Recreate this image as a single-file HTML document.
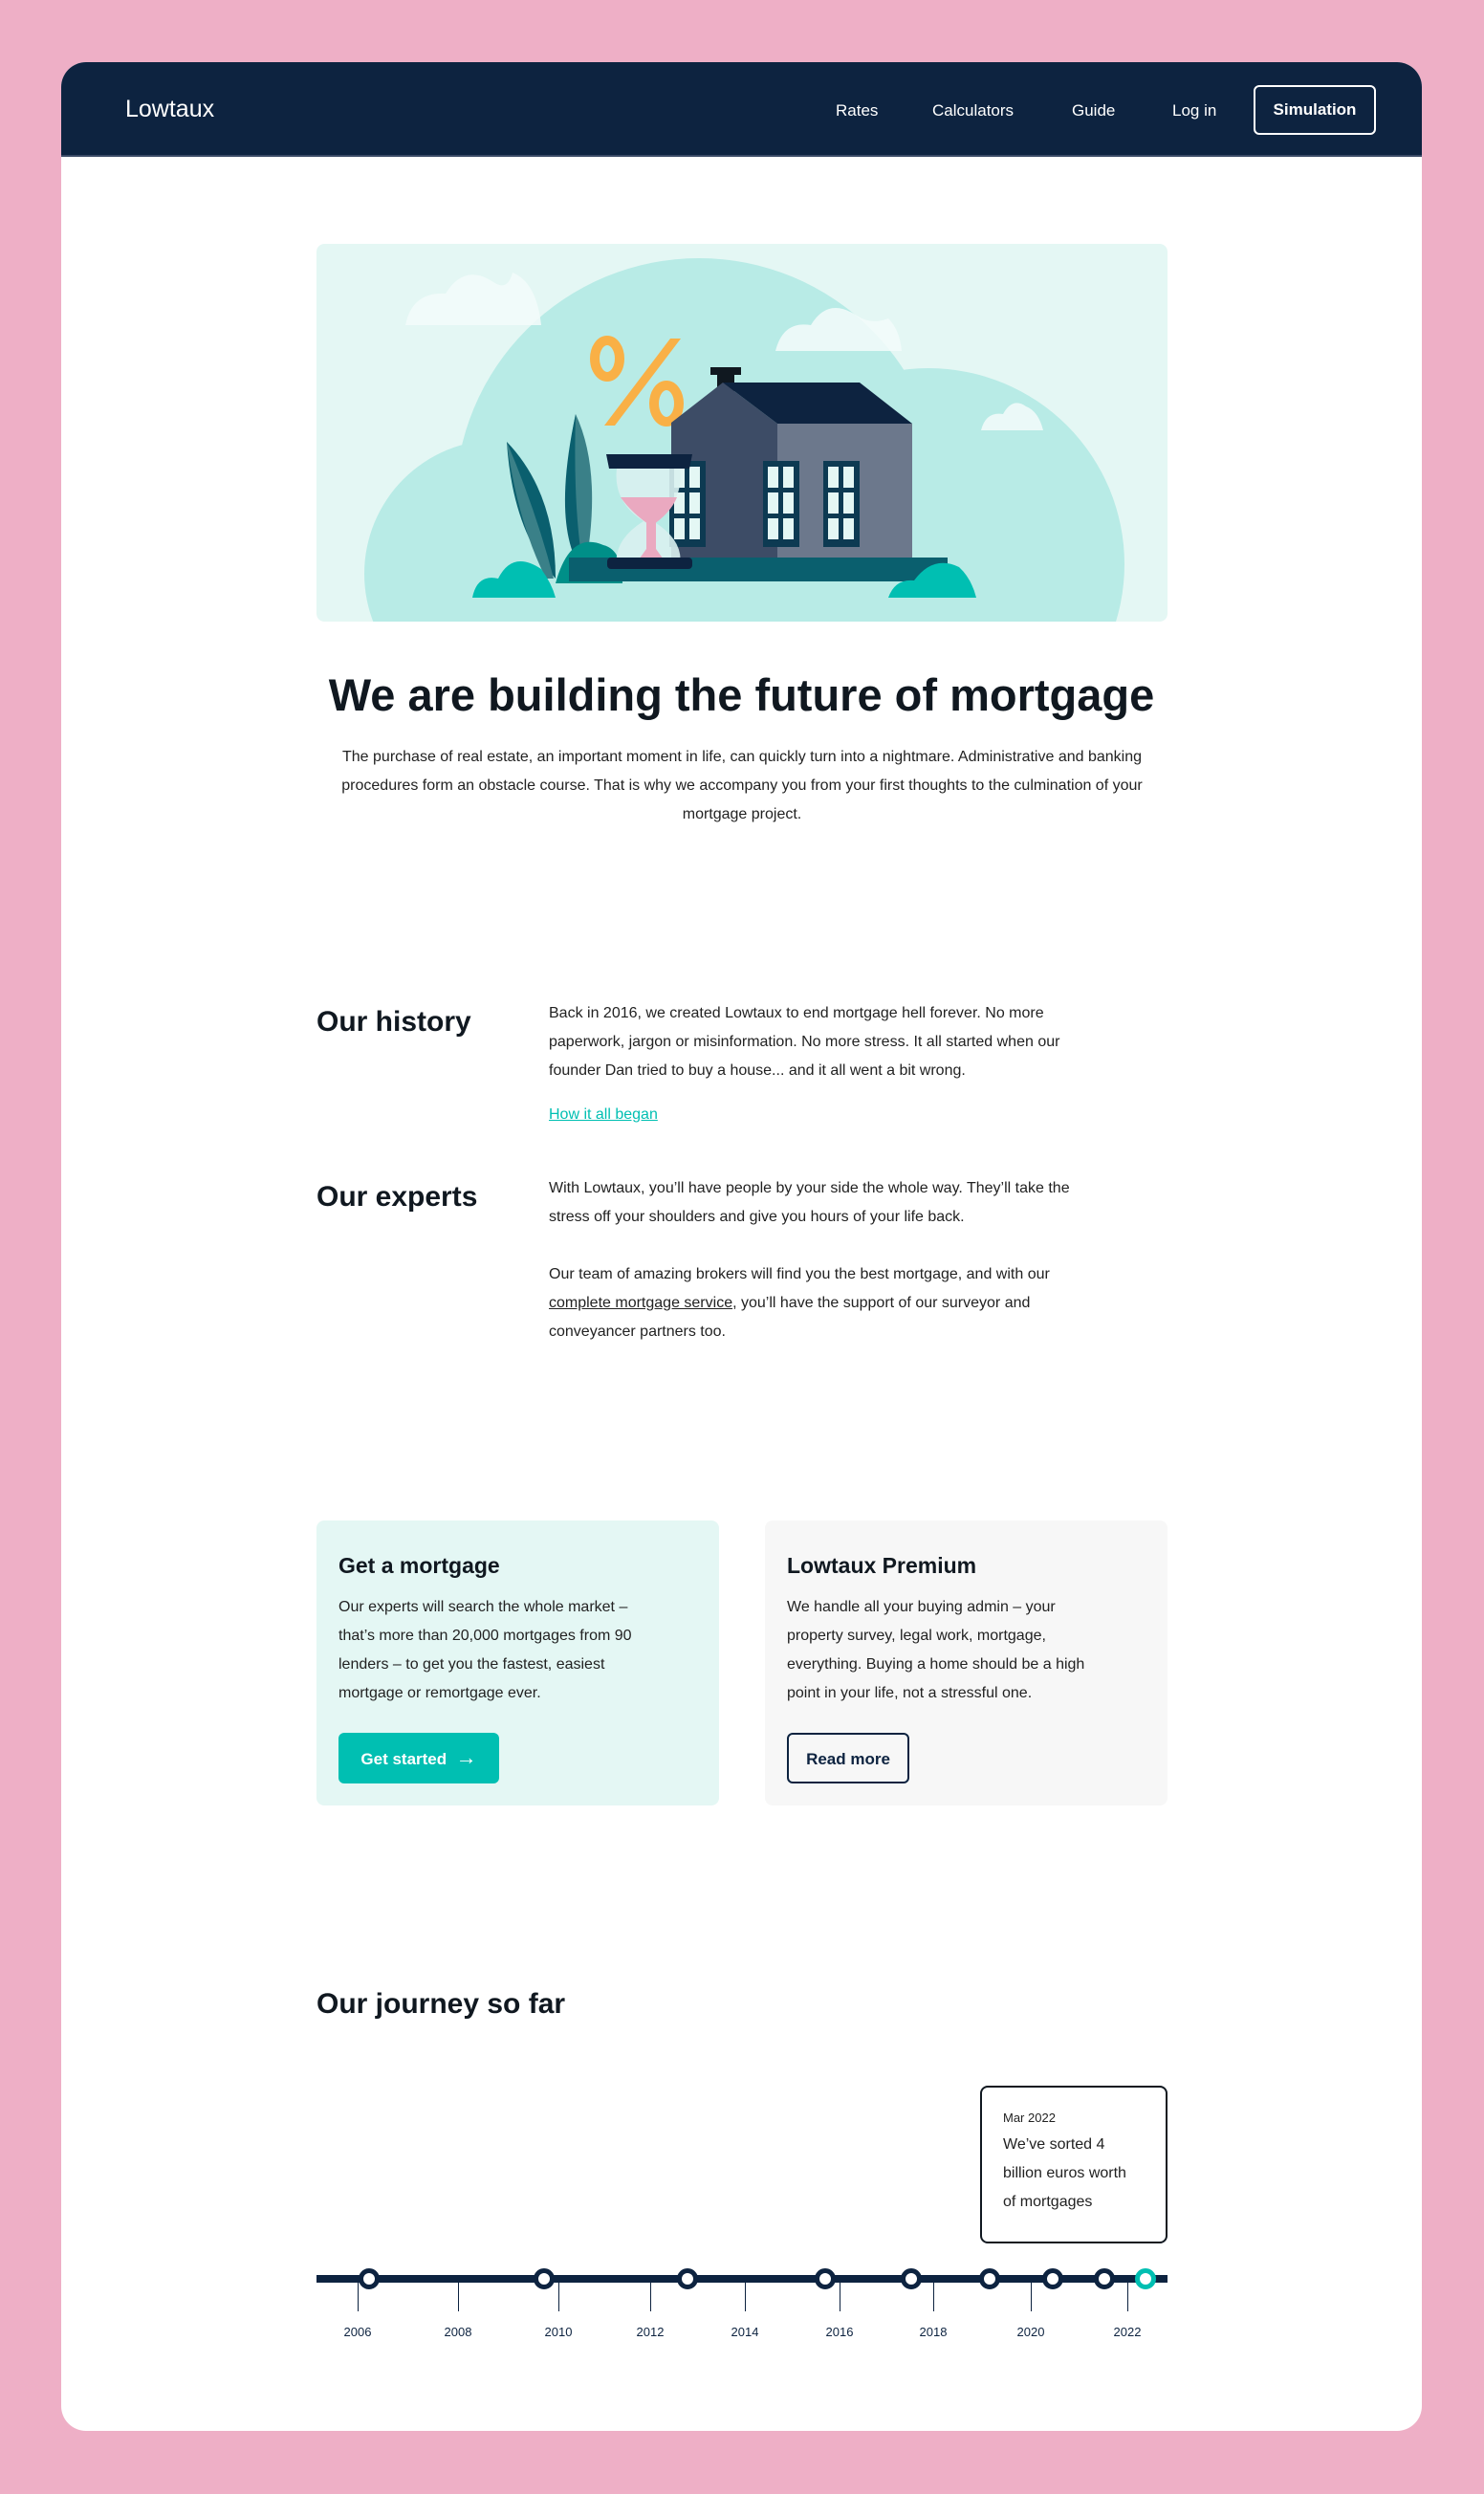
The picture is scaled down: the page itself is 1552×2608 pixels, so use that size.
<!DOCTYPE html>
<html><head><meta charset="utf-8">
<style>
*{margin:0;padding:0;box-sizing:border-box}
body{width:1552px;height:2608px;background:#eeafc6;font-family:"Liberation Sans",sans-serif;color:#101820;position:relative;overflow:hidden}
.card{position:absolute;left:64px;top:65px;width:1423px;height:2477px;background:#fff;border-radius:26px;overflow:hidden}
.nav{position:absolute;left:0;top:0;width:100%;height:99px;background:#0d2340;border-bottom:2px solid #3a4a66}
.nav .logo{position:absolute;left:67px;top:35px;color:#fff;font-size:25px}
.nav a{position:absolute;top:41px;color:#fff;font-size:17px;text-decoration:none}
.sim{position:absolute;left:1247px;top:24px;width:128px;height:52px;border:2px solid #fff;border-radius:6px;color:#fff;font-weight:bold;font-size:17px;text-align:center;line-height:48px}
.abs{position:absolute}
h1{position:absolute;left:0;width:100%;top:634px;text-align:center;font-size:47px;font-weight:bold;color:#101820}
.intro{position:absolute;left:287px;width:850px;top:712px;text-align:center;font-size:16px;line-height:30px;color:#222}
h2{position:absolute;font-size:30px;font-weight:bold;color:#101820}
.p{position:absolute;left:510px;width:590px;font-size:16px;line-height:30px;color:#222}
.box{position:absolute;top:1525px;width:421px;height:298px;border-radius:8px;padding:32px 23px}
.box h3{font-size:23px;font-weight:bold;margin-bottom:14px;line-height:30px}
.box p{font-size:16px;line-height:30px;color:#222;width:340px}
.btn{position:absolute;top:222px;left:23px;height:53px;border-radius:6px;font-weight:bold;font-size:17px;line-height:51px;text-align:center}
.yr{position:absolute;top:2366px;font-size:13px;color:#0d2340;width:60px;margin-left:-30px;text-align:center}
.tk{position:absolute;top:2318px;width:1px;height:34px;background:#0d2340}
.dot{position:absolute;top:2307px;width:22px;height:22px;margin-left:-11px;border-radius:50%;background:#fff;border:5px solid #0d2340}
</style></head><body>
<div class="card">
 <div class="nav">
  <div class="logo">Lowtaux</div>
  <a style="left:810px">Rates</a>
  <a style="left:911px">Calculators</a>
  <a style="left:1057px">Guide</a>
  <a style="left:1162px">Log in</a>
  <div class="sim">Simulation</div>
 </div>

 <svg class="abs" style="left:267px;top:190px;border-radius:8px" width="890" height="395" viewBox="0 0 890 395">
  <defs><clipPath id="c"><rect width="890" height="395" rx="8"/></clipPath></defs>
  <g clip-path="url(#c)">
  <rect width="890" height="395" fill="#e4f7f4"/>
  <circle cx="400" cy="270" r="255" fill="#b8ebe6"/>
  <circle cx="640" cy="335" r="205" fill="#b8ebe6"/>
  <circle cx="190" cy="345" r="140" fill="#b8ebe6"/>
  <rect x="190" y="290" width="600" height="105" fill="#b8ebe6"/>
  <g fill="#f3fbfa" opacity=".85">
   <path d="M93 85 Q100 50 135 52 Q155 20 185 40 Q200 50 205 30 Q230 40 235 85 Z"/>
   <path d="M480 112 Q488 80 517 85 Q535 55 565 75 Q580 85 598 78 Q610 90 612 112 Z"/>
   <path d="M695 195 Q700 175 718 178 Q728 160 742 170 Q755 175 760 195 Z"/>
  </g>
  <ellipse cx="304" cy="120" rx="13" ry="19" fill="none" stroke="#f9b046" stroke-width="10"/>
  <ellipse cx="366" cy="167" rx="13" ry="19" fill="none" stroke="#f9b046" stroke-width="10"/>
  <polygon points="370,99 381,99 312,190 301,190" fill="#f9b046"/>
  <path d="M199 207 Q250 260 250 350 Q205 300 199 207Z" fill="#0a5f6e"/>
  <path d="M199 207 Q230 280 248 350 L240 350 Q210 290 199 207Z" fill="#3a8088"/>
  <path d="M271 178 Q300 240 280 345 Q250 280 271 178Z" fill="#3a8088"/>
  <path d="M271 178 Q268 280 280 345 Q245 300 271 178Z" fill="#0a5f6e"/>
  <path d="M250 355 Q265 300 300 315 Q320 320 320 355Z" fill="#008f88"/>
  <rect x="264" y="328" width="396" height="25" fill="#0a5f6e"/>
  <rect x="412" y="129" width="32" height="8" fill="#101820"/>
  <rect x="419" y="137" width="18" height="25" fill="#101820"/>
  <polygon points="371,187 425,145 482,188 482,328 371,328" fill="#3d4c66"/>
  <rect x="482" y="188" width="141" height="140" fill="#6c788c"/>
  <polygon points="425,145 568,145 623,188 482,188" fill="#0d2340"/>
  <g fill="#0d3a52">
   <rect x="369" y="227" width="38" height="90"/><rect x="467" y="227" width="38" height="90"/><rect x="530" y="227" width="38" height="90"/>
  </g>
  <g fill="#e4f7f4">
   <rect x="374" y="233" width="11" height="22"/><rect x="390" y="233" width="11" height="22"/><rect x="374" y="260" width="11" height="22"/><rect x="390" y="260" width="11" height="22"/><rect x="374" y="287" width="11" height="22"/><rect x="390" y="287" width="11" height="22"/>
   <rect x="472" y="233" width="11" height="22"/><rect x="488" y="233" width="11" height="22"/><rect x="472" y="260" width="11" height="22"/><rect x="488" y="260" width="11" height="22"/><rect x="472" y="287" width="11" height="22"/><rect x="488" y="287" width="11" height="22"/>
   <rect x="535" y="233" width="11" height="22"/><rect x="551" y="233" width="11" height="22"/><rect x="535" y="260" width="11" height="22"/><rect x="551" y="260" width="11" height="22"/><rect x="535" y="287" width="11" height="22"/><rect x="551" y="287" width="11" height="22"/>
  </g>
  <path d="M314 235 L380 235 Q385 270 352 290 Q385 310 380 338 L314 338 Q310 310 342 290 Q310 270 314 235Z" fill="#d9f1ef" opacity=".9"/>
  <path d="M318 265 L377 265 Q370 282 350 295 Q330 282 318 265Z" fill="#eaa9c0"/>
  <rect x="345" y="290" width="10" height="30" fill="#eaa9c0"/>
  <polygon points="330,340 370,340 350,312" fill="#eaa9c0"/>
  <path d="M303 220 L393 220 L390 235 L306 235Z" fill="#0d2340"/>
  <rect x="304" y="328" width="89" height="12" rx="4" fill="#0d2340"/>
  <path d="M163 370 Q168 345 190 350 Q205 320 235 340 Q246 355 250 370Z" fill="#00bfb2"/>
  <path d="M598 370 Q605 350 625 352 Q645 325 672 338 Q685 350 690 370Z" fill="#00bfb2"/>
  </g>
 </svg>

 <h1>We are building the future of mortgage</h1>
 <div class="intro">The purchase of real estate, an important moment in life, can quickly turn into a nightmare. Administrative and banking procedures form an obstacle course. That is why we accompany you from your first thoughts to the culmination of your mortgage project.</div>

 <h2 style="left:267px;top:987px">Our history</h2>
 <div class="p" style="top:980px">Back in 2016, we created Lowtaux to end mortgage hell forever. No more paperwork, jargon or misinformation. No more stress. It all started when our founder Dan tried to buy a house... and it all went a bit wrong.</div>
 <div class="p" style="top:1086px"><span style="color:#00bfb2;text-decoration:underline">How it all began</span></div>
 <h2 style="left:267px;top:1170px">Our experts</h2>
 <div class="p" style="top:1163px">With Lowtaux, you’ll have people by your side the whole way. They’ll take the stress off your shoulders and give you hours of your life back.</div>
 <div class="p" style="top:1253px">Our team of amazing brokers will find you the best mortgage, and with our <span style="text-decoration:underline">complete mortgage service</span>, you’ll have the support of our surveyor and conveyancer partners too.</div>

 <div class="box" style="left:267px;background:#e4f7f4">
  <h3>Get a mortgage</h3>
  <p>Our experts will search the whole market – that’s more than 20,000 mortgages from 90 lenders – to get you the fastest, easiest mortgage or remortgage ever.</p>
  <div class="btn" style="width:168px;background:#00bfb2;color:#fff">Get started &nbsp;<span style="font-size:22px">→</span></div>
 </div>
 <div class="box" style="left:736px;background:#f7f7f7">
  <h3>Lowtaux Premium</h3>
  <p>We handle all your buying admin – your property survey, legal work, mortgage, everything. Buying a home should be a high point in your life, not a stressful one.</p>
  <div class="btn" style="width:128px;border:2px solid #0d2340;color:#0d2340">Read more</div>
 </div>

 <h2 style="left:267px;top:2014px">Our journey so far</h2>
 <div class="abs" style="left:961px;top:2116px;width:196px;height:165px;border:2px solid #101820;border-radius:8px;padding:24px 22px">
  <div style="font-size:13px;color:#222">Mar 2022</div>
  <div style="font-size:16px;line-height:30px;margin-top:6px;color:#222;width:140px">We’ve sorted 4 billion euros worth of mortgages</div>
 </div>
 <div class="abs" style="left:267px;top:2314px;width:890px;height:8px;background:#0d2340"></div>
 <div class="tk" style="left:310px"></div><div class="tk" style="left:415px"></div><div class="tk" style="left:520px"></div><div class="tk" style="left:616px"></div><div class="tk" style="left:715px"></div><div class="tk" style="left:814px"></div><div class="tk" style="left:912px"></div><div class="tk" style="left:1014px"></div><div class="tk" style="left:1115px"></div>
 <div class="yr" style="left:310px">2006</div><div class="yr" style="left:415px">2008</div><div class="yr" style="left:520px">2010</div><div class="yr" style="left:616px">2012</div><div class="yr" style="left:715px">2014</div><div class="yr" style="left:814px">2016</div><div class="yr" style="left:912px">2018</div><div class="yr" style="left:1014px">2020</div><div class="yr" style="left:1115px">2022</div>
 <div class="dot" style="left:322px"></div><div class="dot" style="left:505px"></div><div class="dot" style="left:655px"></div><div class="dot" style="left:799px"></div><div class="dot" style="left:889px"></div><div class="dot" style="left:971px"></div><div class="dot" style="left:1037px"></div><div class="dot" style="left:1091px"></div><div class="dot" style="left:1134px;border-color:#00bfb2"></div>
</div>
</body></html>
